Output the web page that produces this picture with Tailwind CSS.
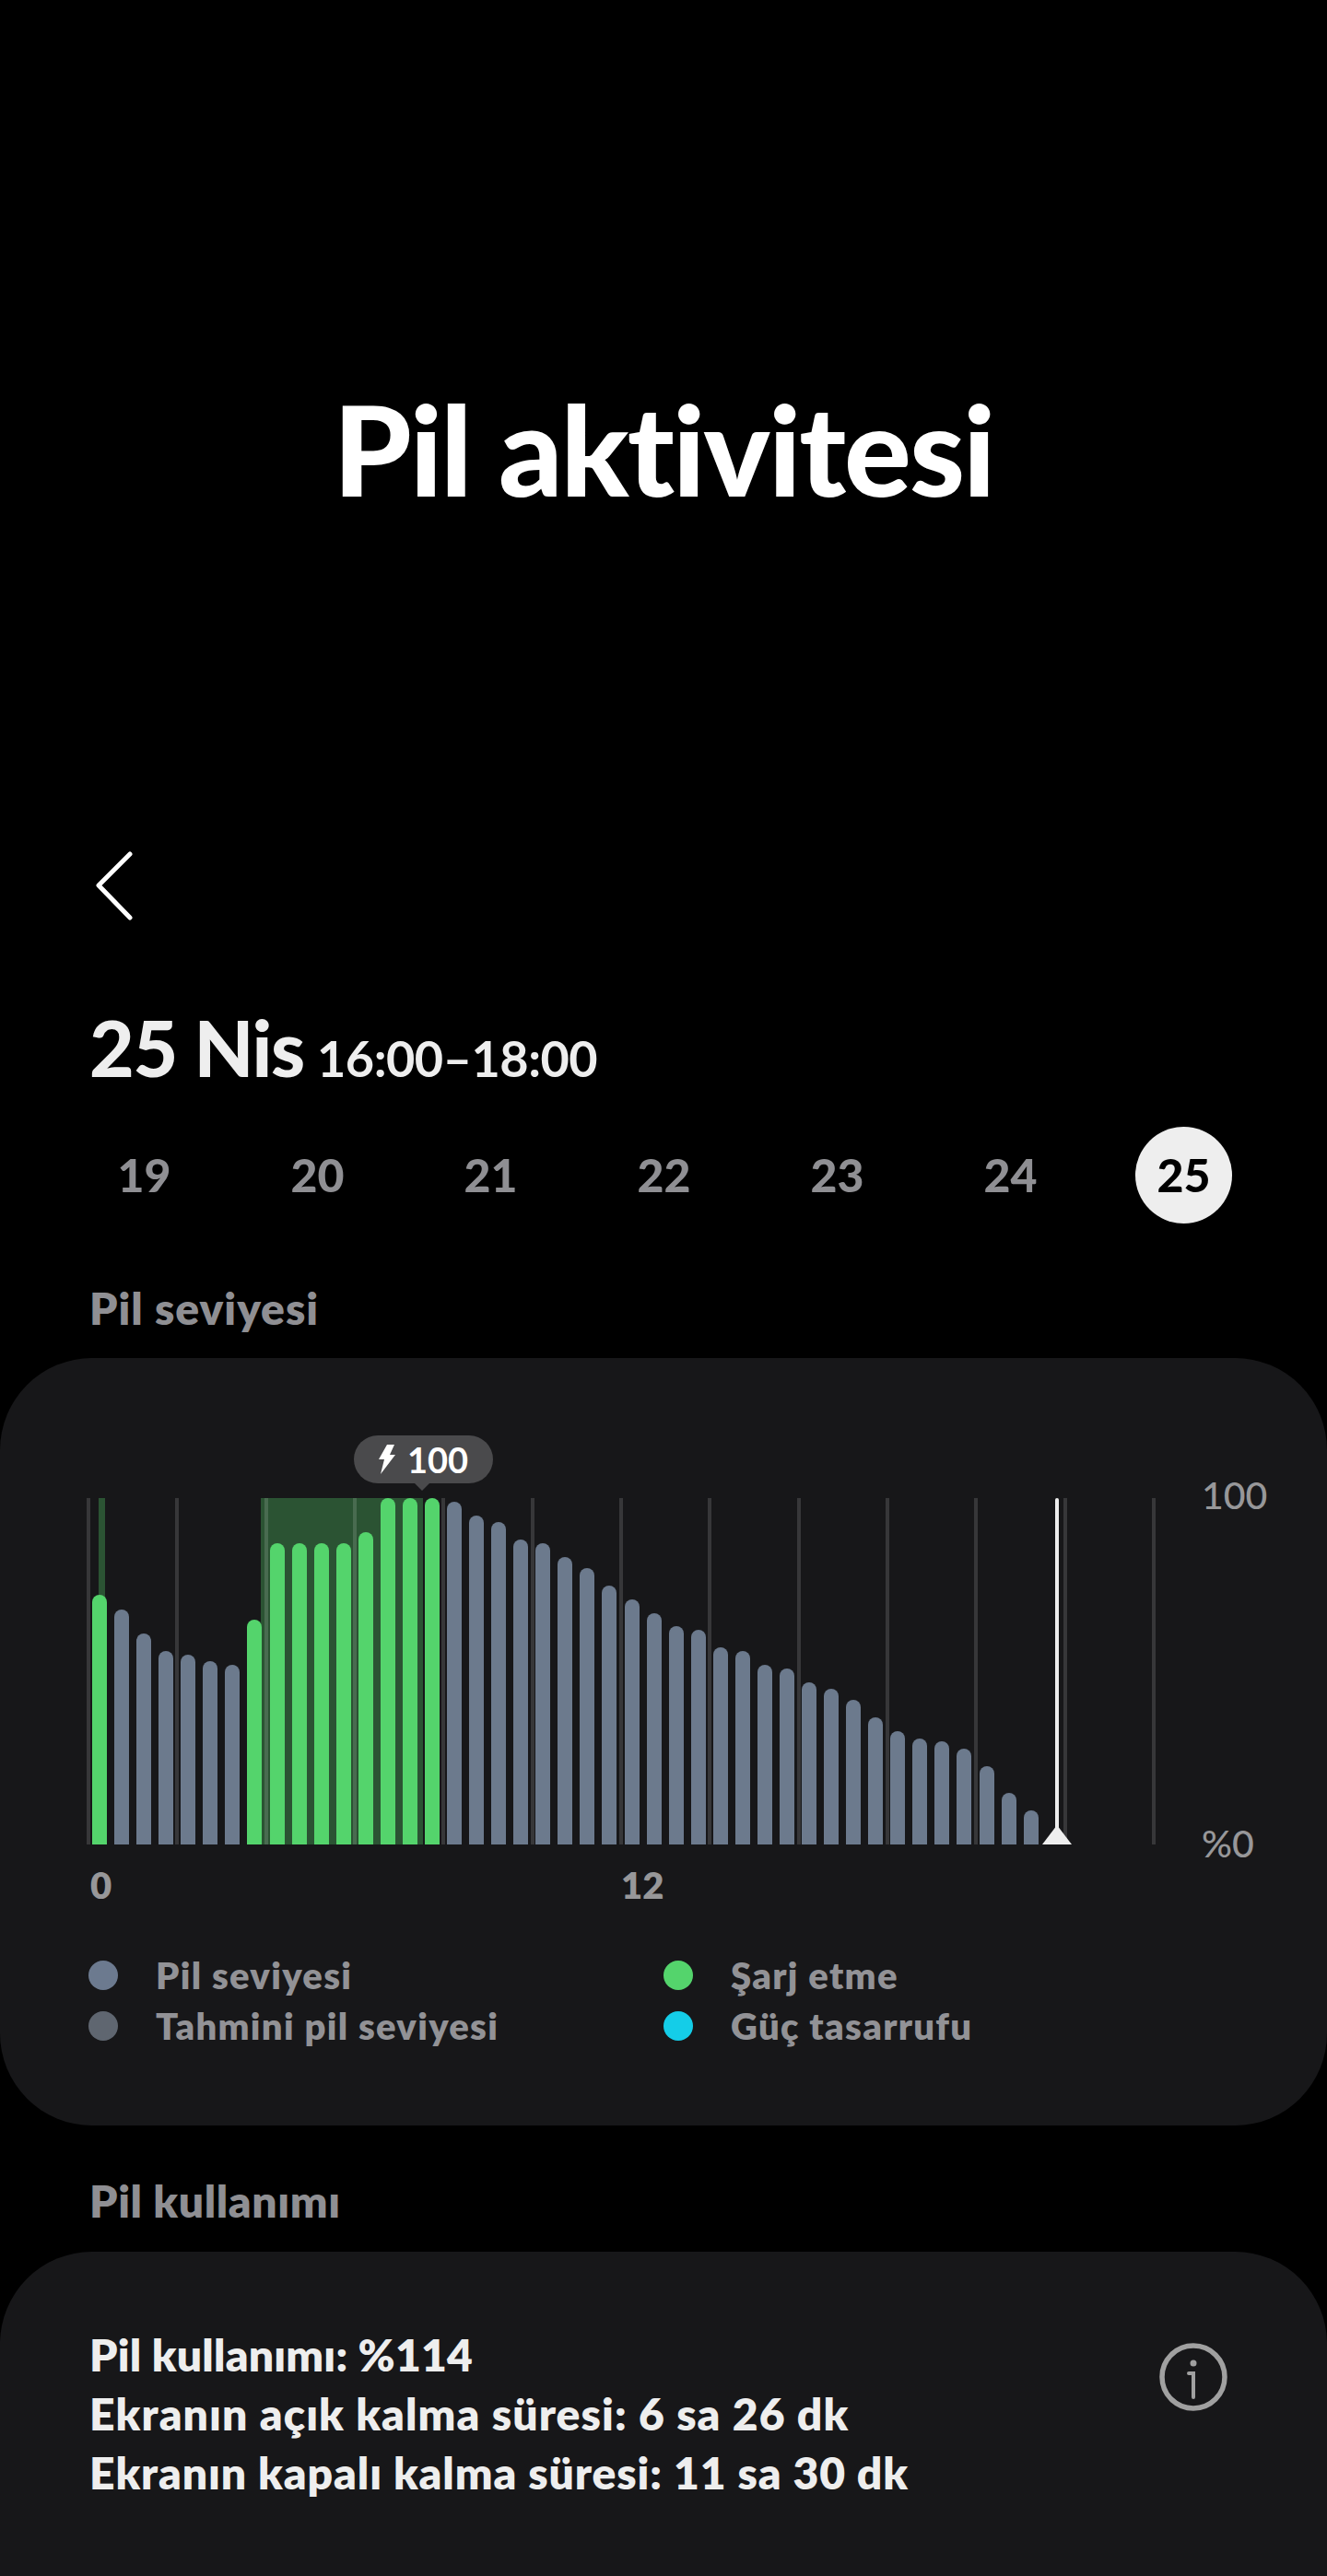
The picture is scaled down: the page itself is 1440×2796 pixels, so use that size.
<!DOCTYPE html>
<html lang="tr">
<head>
  <meta charset="UTF-8" />
  <title>Pil aktivitesi</title>
  <script src="https://cdn.jsdelivr.net/npm/@tailwindcss/browser@4"></script>
</head>
<body class="bg-black">
<main class="w-[1440px] h-[2796px] overflow-hidden bg-black font-['Lato',sans-serif] [font-variant-ligatures:none]">

  <h1 class="pt-[405px] h-[900px] text-center text-white text-[136px] leading-[164px] font-black tracking-[-2px]">Pil aktivitesi</h1>

  <svg class="ml-[104px] mt-[24px] block" width="40" height="75" viewBox="0 0 40 75" fill="none" stroke="white" stroke-width="5" stroke-linecap="round" stroke-linejoin="round">
    <path d="M37 3 L3 37 L37 72" />
  </svg>

  <div class="mt-[88px] pl-[97px] flex items-baseline gap-[14px] text-[#eeeeee] h-[100px]">
    <span class="text-[84px] leading-[100px] font-black tracking-[-1.3px]">25 Nis</span>
    <span class="text-[54px] leading-[64px] font-bold tracking-[-0.5px]">16:00–18:00</span>
  </div>

  <div class="mt-[36px] pl-[104px] flex items-center text-[50px] font-black text-[#8f8f93]">
    <span class="w-[105px] h-[105px] mr-[83px] flex items-center justify-center">19</span>
    <span class="w-[105px] h-[105px] mr-[83px] flex items-center justify-center">20</span>
    <span class="w-[105px] h-[105px] mr-[83px] flex items-center justify-center">21</span>
    <span class="w-[105px] h-[105px] mr-[83px] flex items-center justify-center">22</span>
    <span class="w-[105px] h-[105px] mr-[83px] flex items-center justify-center">23</span>
    <span class="w-[105px] h-[105px] mr-[83px] flex items-center justify-center">24</span>
    <span class="w-[105px] h-[105px] flex items-center justify-center rounded-full bg-[#eeeeee] text-black">25</span>
  </div>

  <h2 class="mt-[62px] pl-[97px] text-[48px] leading-[60px] font-extrabold tracking-[1px] text-[#8f8f93]">Pil seviyesi</h2>

  <section class="mt-[24px] h-[833px] rounded-[100px] bg-[#171719] relative">
    <!-- tooltip -->
    <div class="absolute left-[384px] top-[84px] w-[151px] h-[52px] rounded-[26px] bg-[#4a4a4c] flex items-center justify-center gap-[13px] text-white text-[38px] font-bold">
      <svg width="18" height="32" viewBox="0 0 18 32" fill="white"><path d="M9 0 L17 0 L12 11 L18 11 L2 32 L6 16 L0 16 Z" /></svg>
      <span class="leading-none">100</span>
      <div class="absolute left-[66px] top-[52px] w-0 h-0 border-x-[8px] border-x-transparent border-t-[8px] border-t-[#4a4a4c]"></div>
    </div>

    <div class="pt-[152px] pl-[94px] flex">
      <div class="relative w-[1160px] h-[376px]">
        <!-- charging bands -->
        <div class="absolute left-[13px] top-0 bottom-0 w-[7px] bg-[#2b5333]"></div>
        <div class="absolute left-[189px] top-0 bottom-0 w-[176px] bg-[#2b5333]"></div>
        <!-- grid lines -->
        <div class="absolute inset-0 flex justify-between">
          <i class="block w-[4px] bg-white/[0.14]"></i><i class="block w-[4px] bg-white/[0.14]"></i><i class="block w-[4px] bg-white/[0.14]"></i><i class="block w-[4px] bg-white/[0.14]"></i>
          <i class="block w-[4px] bg-white/[0.14]"></i><i class="block w-[4px] bg-white/[0.14]"></i><i class="block w-[4px] bg-white/[0.14]"></i><i class="block w-[4px] bg-white/[0.14]"></i>
          <i class="block w-[4px] bg-white/[0.14]"></i><i class="block w-[4px] bg-white/[0.14]"></i><i class="block w-[4px] bg-white/[0.14]"></i><i class="block w-[4px] bg-white/[0.14]"></i>
          <i class="block w-[4px] bg-white/[0.14]"></i>
        </div>
        <!-- bars -->
        <div id="bars" class="absolute left-[6px] top-0 bottom-0 flex items-end gap-[8.07px]"></div>
        <!-- now marker -->
        <div class="absolute left-[1051px] top-0 bottom-0 w-[4px] rounded-t-full bg-[#eeeeee]"></div>
        <div class="absolute left-[1037px] bottom-0 w-0 h-0 border-x-[16px] border-x-transparent border-b-[21px] border-b-[#eeeeee]"></div>
      </div>
      <div class="ml-[50px] -mt-[23px] h-[418px] flex flex-col justify-between text-[41px] leading-[40px] font-medium text-[#979799]">
        <span>100</span>
        <span>%0</span>
      </div>
    </div>

    <div class="mt-[1px] pl-[98px] flex text-[40px] leading-[48px] font-extrabold text-[#979799]">
      <span class="w-[576px]">0</span>
      <span>12</span>
    </div>

    <div class="mt-[58px] pl-[96px] grid grid-cols-[624px_1fr] gap-y-[23px] text-[40px] leading-[32px] font-extrabold tracking-[1.3px] text-[#929296]">
      <div class="flex items-center gap-[41px]"><i class="block w-[32px] h-[32px] rounded-full bg-[#6c7a8f]"></i>Pil seviyesi</div>
      <div class="flex items-center gap-[41px]"><i class="block w-[32px] h-[32px] rounded-full bg-[#54d46c]"></i>Şarj etme</div>
      <div class="flex items-center gap-[41px]"><i class="block w-[32px] h-[32px] rounded-full bg-[#5f6670]"></i>Tahmini pil seviyesi</div>
      <div class="flex items-center gap-[41px]"><i class="block w-[32px] h-[32px] rounded-full bg-[#14cde8]"></i>Güç tasarrufu</div>
    </div>
  </section>

  <h2 class="mt-[52px] pl-[97px] text-[48px] leading-[60px] font-extrabold tracking-[0.6px] text-[#8f8f93]">Pil kullanımı</h2>

  <section class="mt-[25px] h-[400px] rounded-t-[100px] bg-[#171719] pl-[97px] pr-[108px] pt-[80px] flex justify-between">
    <div class="text-[48px] leading-[64px] font-extrabold text-[#eeeeee]">
      <p class="tracking-[0.2px]">Pil kullanımı: %114</p>
      <p class="tracking-[1.1px]">Ekranın açık kalma süresi: 6 sa 26 dk</p>
      <p class="tracking-[0.9px]">Ekranın kapalı kalma süresi: 11 sa 30 dk</p>
    </div>
    <svg class="mt-[19px]" width="74" height="74" viewBox="0 0 74 74" fill="none" stroke="#a0a0a0" stroke-width="5.5" stroke-linecap="round">
      <circle cx="37" cy="37" r="34" />
      <path d="M32 33 H37 V59" stroke-width="4" />
      <circle cx="37" cy="22" r="3.5" fill="#a0a0a0" stroke="none" />
    </svg>
  </section>
</main>

<script>
  // bar heights read off the chart, px from the baseline (chart is 376 tall)
  const heights = [271, 255, 229, 210, 206, 199, 195, 244, 327, 327, 327, 327, 339, 376, 376, 376,
    372, 357, 350, 331, 327, 312, 300, 281, 266, 251, 237, 233, 214, 210, 195, 191, 176, 169, 157,
    138, 123, 115, 112, 104, 85, 56, 37];
  const charging = [0, 7, 8, 9, 10, 11, 12, 13, 14, 15];
  const bars = document.getElementById("bars");

  heights.forEach((h, i) => {
    const bar = document.createElement("div");
    bar.className = charging.includes(i)
      ? "w-[16px] rounded-t-full bg-[#54d46c]"
      : "w-[16px] rounded-t-full bg-[#6c7a8d]";
    bar.style.height = h + "px";
    bars.appendChild(bar);
  });
</script>
</body>
</html>
